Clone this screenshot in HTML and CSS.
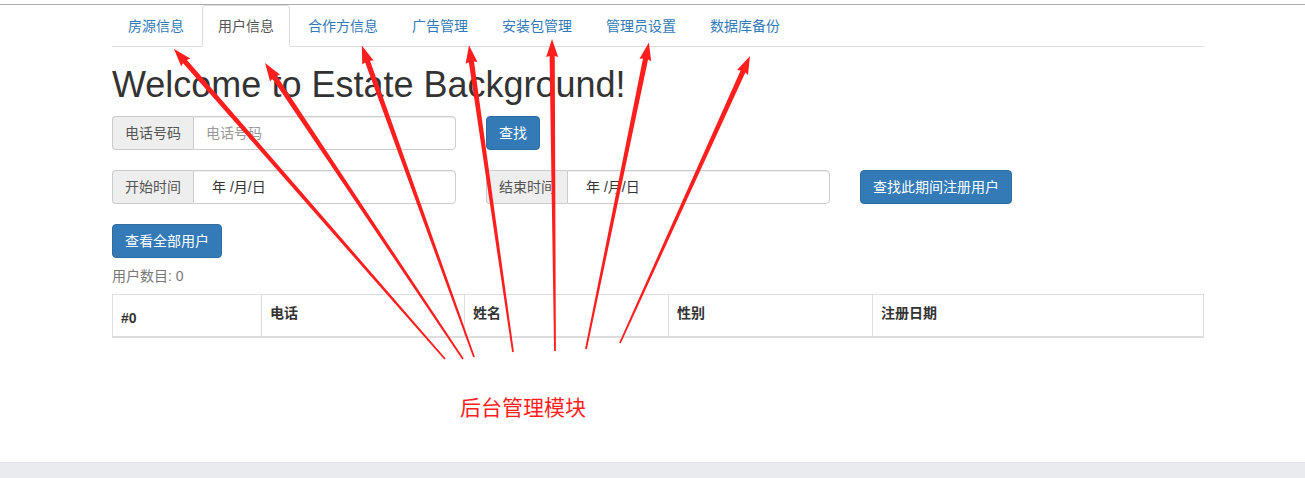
FILE: index.html
```html
<!DOCTYPE html>
<html lang="zh-CN">
<head>
<meta charset="utf-8">
<title>Estate Background</title>
<link rel="stylesheet" href="styles.css">
</head>
<body>
<div class="topline"></div>
<div class="container">
  <ul class="tabs">
    <li class="tab">房源信息</li>
    <li class="tab active">用户信息</li>
    <li class="tab">合作方信息</li>
    <li class="tab">广告管理</li>
    <li class="tab">安装包管理</li>
    <li class="tab">管理员设置</li>
    <li class="tab">数据库备份</li>
  </ul>
  <h1 class="title">Welcome to Estate Background!</h1>
  <div class="form-row">
    <div class="input-group">
      <span class="addon">电话号码</span>
      <span class="field placeholder">电话号码</span>
    </div>
    <button class="btn">查找</button>
  </div>
  <div class="form-row spaced">
    <div class="input-group">
      <span class="addon">开始时间</span>
      <span class="field date">年 /月/日</span>
    </div>
    <div class="input-group">
      <span class="addon">结束时间</span>
      <span class="field date">年 /月/日</span>
    </div>
    <button class="btn">查找此期间注册用户</button>
  </div>
  <div class="form-row spaced">
    <button class="btn">查看全部用户</button>
  </div>
  <p class="count">用户数目: 0</p>
  <table class="users">
    <colgroup>
      <col class="c1"><col class="c2"><col class="c3"><col class="c4"><col class="c5">
    </colgroup>
    <thead>
      <tr>
        <th class="num">#0</th>
        <th>电话</th>
        <th>姓名</th>
        <th>性别</th>
        <th>注册日期</th>
      </tr>
    </thead>
  </table>
  <div class="note">后台管理模块</div>
</div>
<div class="footer-bar"></div>

<svg class="arrows" width="1305" height="478" viewBox="0 0 1305 478" xmlns="http://www.w3.org/2000/svg">
  <g fill="#ff1e1e">
    <polygon transform="translate(445 359) rotate(-131.16)" points="0,-0.9 395,-2.6 394,-6 412,0 394,6 395,2.6 0,0.9"/>
    <polygon transform="translate(463 359) rotate(-123.78)" points="0,-0.9 339,-2.6 338,-6 356,0 338,6 339,2.6 0,0.9"/>
    <polygon transform="translate(474 357) rotate(-109.81)" points="0,-0.9 314,-2.6 313,-6 331,0 313,6 314,2.6 0,0.9"/>
    <polygon transform="translate(513 352) rotate(-98.16)" points="0,-0.9 293,-2.6 292,-6 310,0 292,6 293,2.6 0,0.9"/>
    <polygon transform="translate(555 351) rotate(-90.55)" points="0,-0.9 295,-2.6 294,-6 312,0 294,6 295,2.6 0,0.9"/>
    <polygon transform="translate(586 349) rotate(-78.40)" points="0,-0.9 296,-2.6 295,-6 313,0 295,6 296,2.6 0,0.9"/>
    <polygon transform="translate(620 343) rotate(-65.63)" points="0,-0.9 298,-2.6 297,-6 315,0 297,6 298,2.6 0,0.9"/>
  </g>
</svg>
</body>
</html>
```

FILE: styles.css
```css
* {
  box-sizing: border-box;
}

body {
  margin: 0;
  height: 478px;
  overflow: hidden;
  position: relative;
  display: flex;
  flex-direction: column;
  background: #fff;
  color: #333;
  font-family: "Liberation Sans", "Noto Sans CJK SC", sans-serif;
  font-size: 14px;
  line-height: 20px;
}

.topline {
  height: 5px;
  border-bottom: 1px solid #ababab;
  flex: none;
}

.container {
  width: 1092px;
  margin-left: 112px;
  flex: none;
}

.tabs {
  display: flex;
  list-style: none;
  margin: 0;
  padding: 0;
  border-bottom: 1px solid #ddd;
}

.tab {
  margin: 0 2px -1px 0;
  padding: 10px 15px;
  border: 1px solid transparent;
  border-radius: 4px 4px 0 0;
  color: #337ab7;
  line-height: 20px;
}

.tab.active {
  color: #555;
  background: #fff;
  border-color: #ddd;
  border-bottom-color: transparent;
}

.title {
  margin: 18px 0 11px;
  font-size: 36px;
  font-weight: 500;
  line-height: 40px;
  color: #333;
}

.form-row {
  display: flex;
  align-items: center;
  gap: 30px;
}

.form-row.spaced {
  margin-top: 20px;
}

.input-group {
  display: flex;
  width: 344px;
  height: 34px;
}

.addon {
  padding: 6px 12px;
  background: #eee;
  border: 1px solid #ccc;
  border-right: 0;
  border-radius: 4px 0 0 4px;
  color: #555;
  line-height: 20px;
  white-space: nowrap;
}

.field {
  flex: 1;
  padding: 6px 12px;
  border: 1px solid #ccc;
  border-radius: 0 4px 4px 0;
  box-shadow: inset 0 1px 1px rgba(0, 0, 0, 0.075);
  line-height: 20px;
  color: #555;
}

.field.placeholder {
  color: #999;
}

.field.date {
  padding-left: 18px;
  color: #333;
}

.btn {
  height: 34px;
  padding: 6px 12px;
  background: #337ab7;
  border: 1px solid #2e6da4;
  border-radius: 4px;
  color: #fff;
  font-family: inherit;
  font-size: 14px;
  line-height: 20px;
  white-space: nowrap;
}

.count {
  margin: 8px 0;
  color: #777;
}

.users {
  width: 1091px;
  table-layout: fixed;
  border-collapse: collapse;
  border: 1px solid #ddd;
}

.users .c1 { width: 149px; }
.users .c2 { width: 203px; }
.users .c3 { width: 204px; }
.users .c4 { width: 204px; }
.users .c5 { width: 331px; }

.users th {
  padding: 8px 8px 13px;
  border: 1px solid #ddd;
  border-bottom: 2px solid #ddd;
  text-align: left;
  vertical-align: top;
  font-weight: bold;
  line-height: 20px;
  color: #333;
}

.users th.num {
  padding: 13px 8px 8px;
}

.note {
  margin: 53px 0 0 348px;
  font-family: "Noto Sans CJK SC", sans-serif;
  font-size: 21px;
  line-height: 30px;
  color: #ff1e1e;
}

.footer-bar {
  margin-top: auto;
  height: 16px;
  flex: none;
  background: #eaebef;
  border-top: 1px solid #e2e3e8;
}

.arrows {
  position: absolute;
  top: 0;
  left: 0;
  pointer-events: none;
}
```
